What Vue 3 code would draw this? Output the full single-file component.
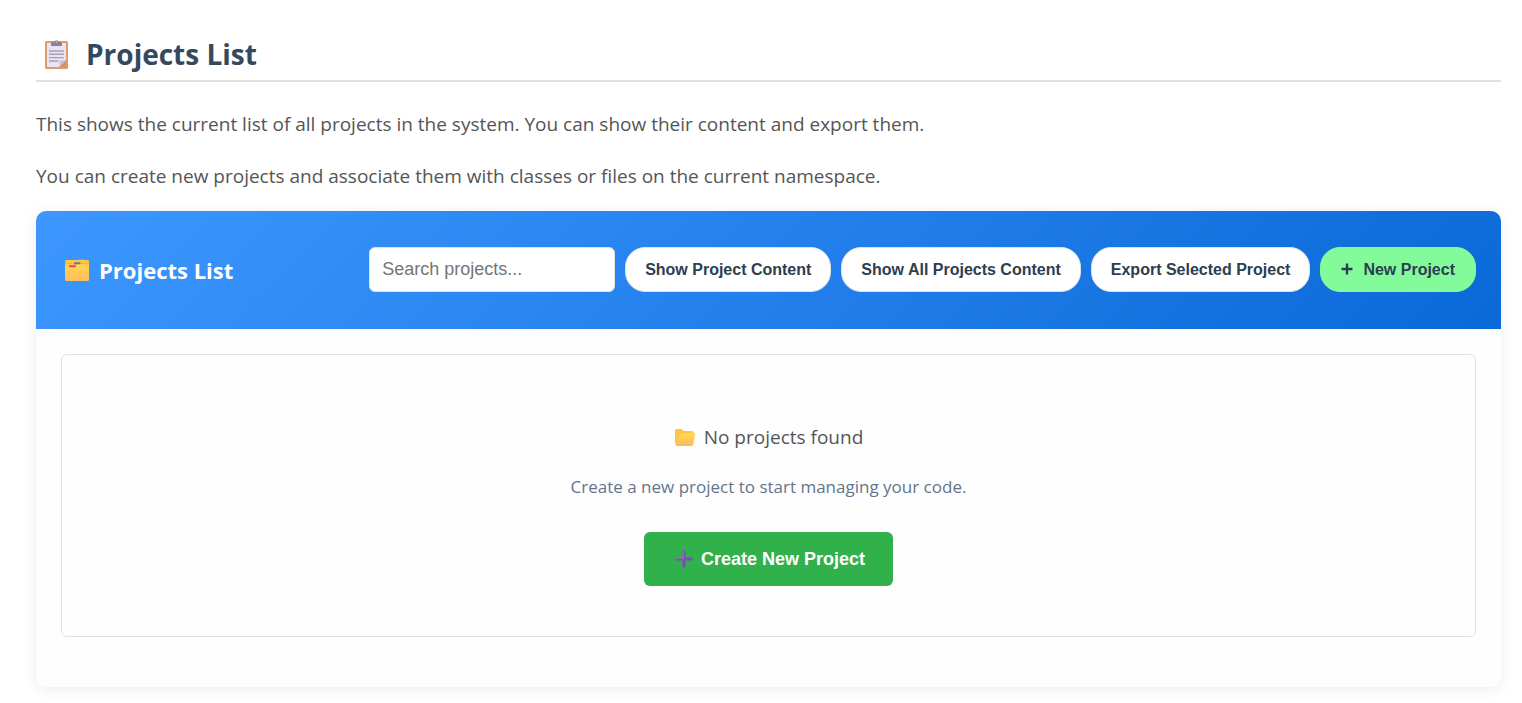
<script setup>
import { ref } from 'vue'

const query = ref('')
const actions = ['Show Project Content', 'Show All Projects Content', 'Export Selected Project']
</script>

<template>
  <main class="page">
    <h1 class="page-title">
      <svg class="clipboard" viewBox="0 0 26 32" aria-hidden="true">
        <rect x="1" y="3" width="23" height="28" rx="1.5" fill="#e09a66" />
        <path d="M3 5h19v17.500l-6.500 6.500H3z" fill="#e9e3f5" />
        <path d="M22 22v7h-7z" fill="#d98f5e" />
        <path d="M15.500 29v-4.500a2 2 0 0 1 2-2H22z" fill="#cbbfdd" />
        <path d="M7 8V5.500a1.500 1.500 0 0 1 1.500-1.500h1.700a2.400 2.400 0 0 1 4.600 0h1.700a1.500 1.500 0 0 1 1.500 1.500V8z" fill="#8d828f" />
        <circle cx="12.500" cy="4" r="0.800" fill="#e0d5e0" />
        <path d="M5 13h15M5 16.300h15M5 19.600h15M5 23h9.500" stroke="#aaa0b4" stroke-width="1.400" />
      </svg>
      <span>Projects List</span>
    </h1>
    <p class="intro">This shows the current list of all projects in the system. You can show their content and export them.</p>
    <p class="intro">You can create new projects and associate them with classes or files on the current namespace.</p>

    <section class="card">
      <header class="card-header">
        <h2 class="card-title">
          <svg class="dividers" viewBox="0 0 26 24" aria-hidden="true">
            <defs>
              <linearGradient id="divider-fill" x1="0" y1="0" x2="0" y2="1">
                <stop offset="0" stop-color="#ffd551" />
                <stop offset="1" stop-color="#ffbd5c" />
              </linearGradient>
            </defs>
            <rect x="14.500" y="1" width="6.500" height="3" rx="1" fill="#46c78c" />
            <rect x="1" y="2" width="24" height="12" rx="1.500" fill="#ffc53f" />
            <path d="M1 5.500h24" stroke="#eeb03c" stroke-width="0.800" />
            <rect x="10" y="4.300" width="6.500" height="2.200" rx="1" fill="#5280b0" />
            <path d="M1 9a1.500 1.500 0 0 1 1.500-1.500h8.500l1.500-1H23.500A1.500 1.500 0 0 1 25 8v13.500a1.500 1.500 0 0 1-1.500 1.500h-21A1.500 1.500 0 0 1 1 21.500z" fill="url(#divider-fill)" />
            <rect x="5" y="7.300" width="7" height="1.900" rx="0.900" fill="#f2454d" />
          </svg>
          <span>Projects List</span>
        </h2>
        <div class="toolbar">
          <input v-model="query" class="search" type="text" placeholder="Search projects..." aria-label="Search projects" />
          <button v-for="label in actions" :key="label" class="pill" type="button">{{ label }}</button>
          <button class="pill pill-new" type="button">
            <svg class="plus-small" viewBox="0 0 12 14" aria-hidden="true">
              <path d="M6 0.500v11M0.500 6h11" stroke="#2c3e50" stroke-width="2.400" />
            </svg>
            <span>New Project</span>
          </button>
        </div>
      </header>
      <div class="card-body">
        <div class="empty">
          <p class="empty-title">
            <svg class="folder" viewBox="0 0 22 20" aria-hidden="true">
              <defs>
                <linearGradient id="folder-fill" x1="0" y1="0" x2="0" y2="1">
                  <stop offset="0" stop-color="#ffdc4c" />
                  <stop offset="1" stop-color="#ffb662" />
                </linearGradient>
              </defs>
              <path d="M1 3.500A1.500 1.500 0 0 1 2.500 2H7.500l2.500 2h8A1.500 1.500 0 0 1 19.500 5.500v12h-17A1.500 1.500 0 0 1 1 16z" fill="#ffc348" />
              <path d="M8.300 6H20a1.200 1.200 0 0 1 1.200 1.500l-2.300 10a2 2 0 0 1-2 1.500H3a1.300 1.300 0 0 1-1.200-1.800l3.500-9.200a2.800 2.800 0 0 1 3-2z" fill="url(#folder-fill)" />
            </svg>
            <span>No projects found</span>
          </p>
          <p class="empty-text">Create a new project to start managing your code.</p>
          <button class="create" type="button">
            <svg class="plus-large" viewBox="0 0 18 18" aria-hidden="true">
              <path d="M9 0.500v17M0.500 9h17" stroke="#7650b8" stroke-width="3.200" />
              <path d="M8.200 0.500v7.700H0.500" fill="none" stroke="#8f78ae" stroke-width="1.200" />
            </svg>
            <span>Create New Project</span>
          </button>
        </div>
      </div>
    </section>
  </main>
</template>

<style>
body {
  margin: 0;
  background: #fff;
}
</style>

<style scoped>
* {
  box-sizing: border-box;
}

.page {
  padding: 32px 21px 16px 36px;
  font-family: 'Segoe UI', 'Open Sans', sans-serif;
  color: #555;
}

.page-title {
  display: flex;
  align-items: center;
  gap: 16px;
  height: 50px;
  margin: 0 0 24px;
  padding: 0 8px 4px;
  border-bottom: 2px solid #dee2e6;
  color: #34495e;
  font-size: 28px;
  font-weight: 700;
  line-height: 44px;
}

.clipboard {
  width: 26px;
  height: 32px;
}

.intro {
  margin: 0 0 16px;
  font-size: 19px;
  line-height: 36px;
}

.card {
  margin-top: 17px;
  border-radius: 10px;
  background: #fefefe;
  box-shadow: 0 2px 15px rgba(0, 0, 0, 0.08);
  overflow: hidden;
}

.card-header {
  display: flex;
  align-items: center;
  justify-content: space-between;
  padding: 36px 25px 37px 28px;
  background: linear-gradient(135deg, #3d97ff, #0a69d8);
}

.card-title {
  display: flex;
  align-items: center;
  gap: 9px;
  margin: 0;
  color: #fff;
  font-size: 22px;
  font-weight: 700;
  line-height: 30px;
}

.dividers {
  width: 26px;
  height: 24px;
}

.toolbar {
  display: flex;
  gap: 10px;
}

.search {
  width: 246px;
  height: 45px;
  padding: 0 12px;
  border: 1px solid #dee2e6;
  border-radius: 6px;
  background: #fff;
  color: #333;
  font: 18px 'Liberation Sans', Arial, sans-serif;
}

.search::placeholder {
  color: #757575;
}

.pill {
  height: 45px;
  padding: 0 19px;
  border: 1px solid #dee2e6;
  border-radius: 20px;
  background: #fff;
  color: #2c3e50;
  font: bold 16px 'Liberation Sans', Arial, sans-serif;
  white-space: nowrap;
}

.pill-new {
  display: flex;
  align-items: center;
  gap: 10px;
  padding: 0 20px;
  border-color: #83fb9b;
  background: #83fb9b;
}

.plus-small {
  width: 12px;
  height: 14px;
}

.card-body {
  padding: 25px 25px 50px;
}

.empty {
  display: flex;
  flex-direction: column;
  align-items: center;
  padding: 64px 24px 50px;
  border: 1px solid #dee2e6;
  border-radius: 6px;
}

.empty-title {
  display: flex;
  align-items: center;
  gap: 8px;
  margin: 0 0 16px;
  font-size: 19px;
  line-height: 36px;
}

.folder {
  width: 22px;
  height: 20px;
}

.empty-text {
  margin: 0 0 29px;
  color: #64748b;
  font-size: 17px;
  line-height: 32px;
}

.create {
  display: flex;
  align-items: center;
  gap: 8px;
  height: 54px;
  padding: 0 28px 0 31px;
  border: 0;
  border-radius: 6px;
  background: #31b14c;
  color: #fff;
  font: bold 18px 'Liberation Sans', Arial, sans-serif;
}

.plus-large {
  width: 18px;
  height: 18px;
}
</style>
